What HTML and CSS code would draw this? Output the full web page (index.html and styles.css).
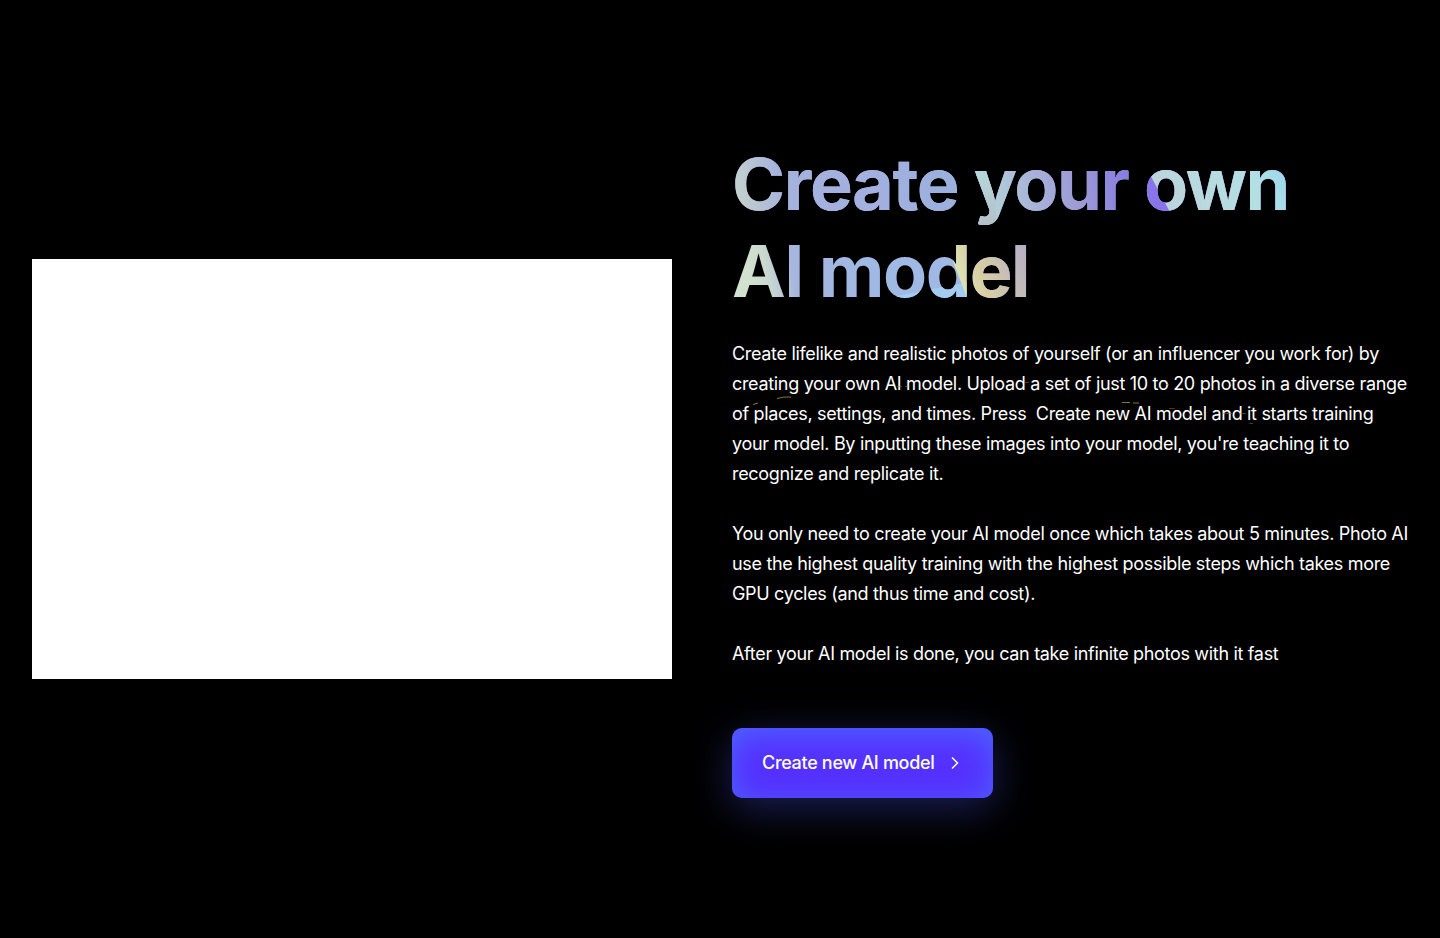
FILE: index.html
```html
<!DOCTYPE html>
<html lang="en">
<head>
<meta charset="utf-8">
<meta name="viewport" content="width=device-width, initial-scale=1">
<title>Create your own AI model</title>
<link rel="stylesheet" href="styles.css">
</head>
<body>
<main class="feature">
  <div class="media"></div>
  <section class="content">
    <h1 class="title">Create your own AI&nbsp;model</h1>
    <div class="copy">
      <svg class="sparks" width="676" height="100" viewBox="0 0 676 100" fill="none" stroke="#8a7440" aria-hidden="true">
        <path d="M45 59.500q6-2 14-1.500M21 65.500l5-1.500M390 63.500h8m3 .5h6"/>
        <path stroke-opacity=".5" d="M165 47.500h5m3 0h2M293 43.500h4M434 45.500h3M437 69.500h6M490 74.500h10m8 0h6M517 84.500h4"/>
      </svg>
      <p class="paragraph">Create lifelike and realistic photos of yourself (or an influencer you work for) by creating your own AI model. Upload a set of just 10 to 20 photos in a diverse range of places, settings, and times. Press&nbsp; Create new AI model and it starts training your model. By inputting these images into your model, you're teaching it to recognize and replicate it.</p>
      <p class="paragraph">You only need to create your AI model once which takes about 5 minutes. Photo AI use the highest quality training with the highest possible steps which takes more GPU cycles (and thus time and cost).</p>
      <p class="paragraph">After your AI model is done, you can take infinite photos with it fast</p>
    </div>
    <button class="cta" type="button">
      <span>Create new AI model</span>
      <svg width="16" height="16" viewBox="0 0 16 16" fill="none" stroke="currentColor" stroke-width="1.500" aria-hidden="true"><path d="M5 2.500 10.500 8 5 13.500"/></svg>
    </button>
  </section>
</main>
</body>
</html>
```

FILE: styles.css
```css
* {
  box-sizing: border-box;
}

body {
  margin: 0;
  background: #000;
  color: #fff;
  font-family: Inter, "Liberation Sans", sans-serif;
  letter-spacing: -0.02em;
}

.feature {
  display: grid;
  grid-template-columns: 640fr 676fr;
  gap: 60px;
  align-items: center;
  min-height: 100vh;
  padding: 32px;
}

.media {
  aspect-ratio: 32 / 21;
  background: #fff;
}

.content {
  display: flex;
  flex-direction: column;
  align-items: flex-start;
}

.title {
  width: 100%;
  margin: 0 0 25px;
  font-size: 72px;
  font-weight: 700;
  line-height: 87px;
  letter-spacing: -0.02em;
  color: transparent;
  background-color: #a0b4e0;
  background-image:
    linear-gradient(62deg, transparent 40px, #bcd4dc 41px, #b6dde0 100px, #b3e0e4 130px, #9ed8ea 158px),
    linear-gradient(69deg, transparent 38px, #dbe2b4 39px, #d9cda4 60px, #cdc4ae 75px, #b5afc6 112px),
    linear-gradient(169deg, transparent 72px, #a2ccf0 73px),
    linear-gradient(165deg, #b8e0e0, #b8dade 25px, #b4c0c8 85px, transparent 86px),
    linear-gradient(80deg, #ccd8c9 0, #a5b2dc 56px, #a3b0e0 140px, #9bb0dc 225px, #b7d6d9 250px, #a9b8d8 295px, #9c98d6 350px, #897fe0 395px, #8972ec 430px),
    linear-gradient(80deg, #d3e2d0 20px, #ccdacf 40px, #a6b6dd 68px, #9fb8e4 140px, #a0bae4 300px);
  background-position: 400px 0, 200px 87px, 140px 87px, 244px 0, 0 0, 0 87px;
  background-size: 276px 87px, 476px 87px, 100px 87px, 20px 87px, 100% 87px, 100% 87px;
  background-repeat: no-repeat;
  -webkit-background-clip: text;
  background-clip: text;
}

.copy {
  position: relative;
  display: grid;
  gap: 30px;
  margin-bottom: 59px;
}

.sparks {
  position: absolute;
  top: 0;
  left: 0;
}

.paragraph {
  margin: 0;
  font-size: 18px;
  font-weight: 400;
  line-height: 30px;
}

.cta {
  display: flex;
  align-items: center;
  gap: 13px;
  min-height: 70px;
  padding: 0 30px;
  border: 0;
  border-radius: 10px;
  background: #5530ff;
  color: #fff;
  font: 500 18px/30px Inter, "Liberation Sans", sans-serif;
  letter-spacing: inherit;
  box-shadow:
    0 10px 40px rgba(80, 90, 255, 0.35),
    inset 0 6px 32px rgba(70, 130, 255, 0.65);
  cursor: pointer;
}
```
